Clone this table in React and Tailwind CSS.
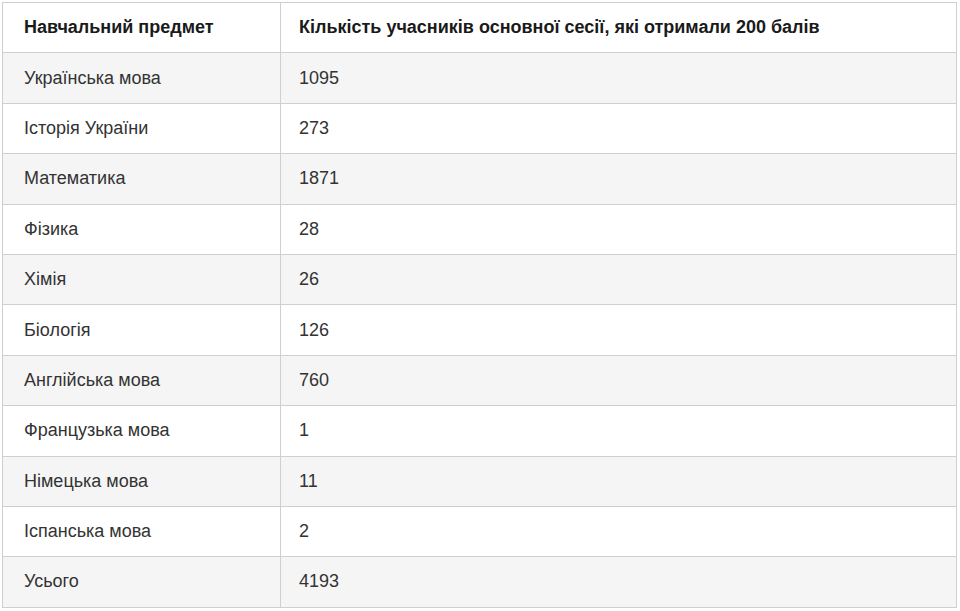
import React from "react";

const rows = [
  ["Українська мова", "1095"],
  ["Історія України", "273"],
  ["Математика", "1871"],
  ["Фізика", "28"],
  ["Хімія", "26"],
  ["Біологія", "126"],
  ["Англійська мова", "760"],
  ["Французька мова", "1"],
  ["Німецька мова", "11"],
  ["Іспанська мова", "2"],
  ["Усього", "4193"],
];

export default function App() {
  return (
    <div className="bg-white min-h-[611px] pl-[2px] pt-[2px] font-['Liberation_Sans',Arial,sans-serif]">
      <table className="w-[955px] border-collapse text-[18px] text-[#333]">
        <thead>
          <tr className="bg-white">
            <th className="w-[278px] h-[50.4px] border border-[#cfcfcf] pl-[21px] text-left font-bold text-[#1a1a1a]">
              Навчальний предмет
            </th>
            <th className="h-[50.4px] border border-[#cfcfcf] pl-[18px] text-left font-bold text-[#1a1a1a]">
              Кількість учасників основної сесії, які отримали 200 балів
            </th>
          </tr>
        </thead>
        <tbody>
          {rows.map(([subject, count], i) => (
            <tr key={subject} className={i % 2 === 0 ? "bg-[#f5f5f5]" : "bg-white"}>
              <td className="h-[50.4px] border border-[#cfcfcf] pl-[21px]">{subject}</td>
              <td className="h-[50.4px] border border-[#cfcfcf] pl-[18px]">{count}</td>
            </tr>
          ))}
        </tbody>
      </table>
    </div>
  );
}
